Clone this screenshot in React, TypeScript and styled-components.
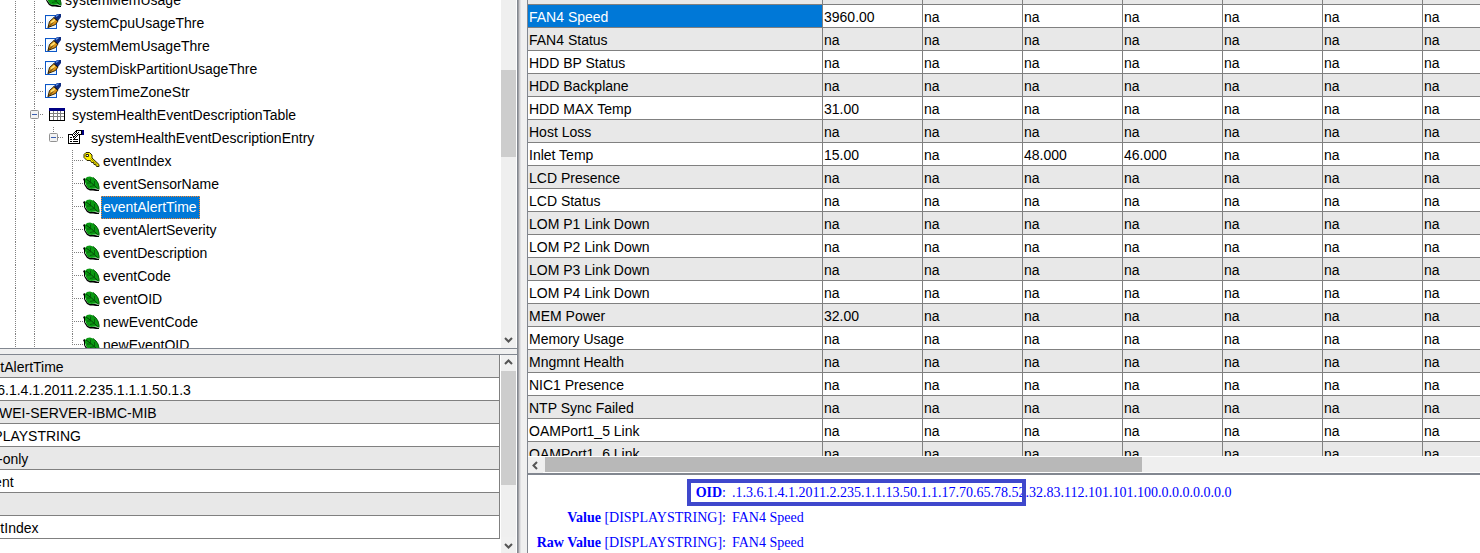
import React from "react";
import styled, { createGlobalStyle, css } from "styled-components";

const GlobalStyle = createGlobalStyle`
  *, *::before, *::after { box-sizing: border-box; }
  body {
    margin: 0;
    background: #eeeeee;
    color: #000;
    font-family: "Liberation Sans", Arial, sans-serif;
    font-size: 14px;
  }
`;

const Window = styled.main`
  display: grid;
  grid-template-columns: 35% 9px minmax(0, 1fr);
  height: 100vh;
  overflow: hidden;
`;

const LeftColumn = styled.section`
  display: grid;
  grid-template-rows: 63fr 5px 36fr;
  min-height: 0;
  min-width: 0;
  border-right: 1px solid #828790;
`;

const RightColumn = styled.section`
  display: grid;
  grid-template-rows: minmax(0, 1fr) 80px;
  min-height: 0;
  border-left: 1px solid #828790;
`;

const VerticalDivider = styled.div`
  background: linear-gradient(to right, #a0a0a4 0 1px, #c8c8cc 1px 2px, #e0e0e2 2px 3px, #f0f0f0 3px);
`;

const HorizontalDivider = styled.div`
  background: #f0f0f0;
`;

const ScrollPane = styled.div`
  display: grid;
  grid-template-columns: minmax(0, 1fr) 16px;
  min-height: 0;
  background: #fff;
`;

const TreePane = styled(ScrollPane)`
  border-bottom: 1px solid #828790;
`;

const DetailsPane = styled(ScrollPane)`
  border-top: 1px solid #828790;
`;

const Viewport = styled.div`
  min-width: 0;
  min-height: 0;
  overflow: hidden;
`;

const Tree = styled.ul`
  list-style: none;
  margin: -11px 0 0;
  padding: 0;
`;

const TreeRow = styled.li`
  display: flex;
  align-items: center;
  height: 23px;
  white-space: nowrap;
`;

const NodeIcon = styled.svg`
  flex: none;
  display: block;
  overflow: visible;
`;

const NodeLabel = styled.span<{ $selected?: boolean; $gap: number }>`
  margin-left: ${(p) => p.$gap}px;
  padding: 0 2px 0 1px;
  line-height: 21px;
  border: 1px solid transparent;
  ${(p) =>
    p.$selected &&
    css`
      background: #0078d7;
      color: #fff;
      border: 1px dotted #ff8728;
    `}
`;

const VerticalBar = styled.div`
  display: flex;
  flex-direction: column;
  margin-right: 1px;
  background: #efefef;
`;

const HorizontalBar = styled.div`
  display: flex;
  height: 15px;
  margin: 1px 0;
  background: #efefef;
`;

const ArrowButton = styled.button`
  flex: none;
  display: grid;
  place-items: center;
  width: 15px;
  height: 16px;
  padding: 0;
  border: 0;
  background: #f0f0f0;
`;

const Gap = styled.div<{ $grow: number }>`
  flex: ${(p) => p.$grow} 1 0;
`;

const Thumb = styled.div<{ $grow: number; $dark?: boolean }>`
  flex: ${(p) => p.$grow} 1 0;
  background: ${(p) => (p.$dark ? "#b8b8b8" : "#cdcdcd")};
`;

const GridTable = styled.table`
  border-collapse: separate;
  border-spacing: 0;
  table-layout: fixed;
`;

const SensorTable = styled(GridTable)`
  width: 995px;
  margin-top: -18px;
`;

const DetailsTable = styled(GridTable)`
  width: calc(100% + 30px);
  margin-left: -31px;
`;

const Row = styled.tr`
  height: 23px;
  background: #fff;
  &:nth-child(odd) { background: #e8e8e8; }
`;

const Cell = styled.td<{ $selected?: boolean }>`
  height: 23px;
  padding: 2px 0 0 1px;
  line-height: 20px;
  border-right: 1px solid #808080;
  border-bottom: 1px solid #808080;
  white-space: nowrap;
  ${(p) =>
    p.$selected &&
    css`
      background: #0078d7;
      color: #fff;
    `}
`;

const TablePane = styled.div`
  display: grid;
  grid-template-rows: minmax(0, 1fr) 17px;
  min-height: 0;
  background: #fff;
`;

const ResultPane = styled.div`
  position: relative;
  border-top: 2px solid #828790;
  background: #fff;
  color: #0000ff;
  overflow: hidden;
`;

const ResultTable = styled.table`
  border-collapse: collapse;
  margin-top: 5px;
  font-family: "Liberation Serif", "Times New Roman", serif;
  font-size: 14px;
  line-height: 25px;
  white-space: nowrap;
`;

const ResultName = styled.th`
  width: 198px;
  padding: 0;
  text-align: right;
  font-weight: 400;
`;

const ResultValue = styled.td`
  padding: 0 0 0 6px;
`;

const Highlight = styled.div`
  position: absolute;
  left: 159px;
  top: 4px;
  width: 339px;
  height: 27px;
  border: 4px solid #3f48cc;
`;

type Kind = "leaf" | "pen" | "table" | "entry" | "key";

const Glyph = ({ kind }: { kind: Kind }) => {
  if (kind === "leaf")
    return (
      <g>
        <path d="M0 3L2 2L2 8L5 12L8 13L12 13L16 14V15H13L10 14.500H7L4 13L2 10L1 8V5Z" fill="#000" />
        <path d="M2 3L4 1L7 0.500L10 1.500L13 4L15 7L16 11V13.500L13 12.500L8 13L5 12L3 9L2 6Z" fill="#0a9a12" />
        <path d="M10 1.500L13 4L15 7L16 11V13.500" fill="none" stroke="#045208" />
        <path d="M3 3L8.500 7L14.500 12.500" fill="none" stroke="#034506" />
        <path d="M7.500 2.500V6M11.500 5V9M4 7H8M7 10.500L11.500 9.500" fill="none" stroke="#045208" strokeWidth="0.800" />
      </g>
    );
  if (kind === "pen")
    return (
      <g>
        <rect x="0.500" y="0.500" width="11" height="13" fill="#e9f5ff" stroke="#0b56c8" />
        <path d="M2 13V6L6 2H1V13Z" fill="#fff" />
        <path d="M3 12.500L4.500 6.500L9 2.500L13 6L10.500 9.500Z" fill="#dc9418" stroke="#3a2604" />
        <path d="M5.500 7L9 4L10.500 5L6.500 9Z" fill="#ffe070" />
        <path d="M3 12.500L8 7.500" stroke="#3a2604" />
        <path d="M9 2L12 -1H16V2L13 6Z" fill="#0e2c80" />
        <path d="M11 1.500L13.500 -0.500" stroke="#5c94ee" strokeWidth="1.500" />
        <path d="M9 2.500L12.500 6" stroke="#000" />
      </g>
    );
  if (kind === "table")
    return (
      <g shapeRendering="crispEdges">
        <rect x="0" y="1" width="16" height="13" fill="#000" />
        <rect x="0" y="1" width="16" height="3" fill="#000084" />
        <path d="M1 4h14v9H1z" fill="#fff" />
        <path d="M4.500 4v9M8.500 4v9M11.500 4v9M1 6.500h14M1 9.500h14" stroke="#808080" />
      </g>
    );
  if (kind === "entry")
    return (
      <g shapeRendering="crispEdges">
        <path d="M0.500 4.500H11.500V13.500H0.500Z" fill="#fff" stroke="#000" />
        <path d="M2 9.500h2M5 9.500h5M2 11.500h2M5 11.500h5M2 7.500h2" stroke="#000" />
        <path d="M4.500 4.500L7.500 1.500L9.500 0.500H13.500V4.500H10.500L6.500 8.500L5.500 7.500Z" fill="#fff" stroke="#000" />
        <path d="M6 4.500h1M8 4.500h1M7 5.500h1M7 3.500h1M9 3.500h1M8 2.500h1M10 2.500h1M6 6.500h1" stroke="#000" />
        <rect x="14" y="0" width="2" height="5" fill="#000084" />
      </g>
    );
  return (
    <g>
      <path
        d="M1 1.500L3 -0.500H6.500L9 2V5L16 11.500V13.500H13.500L12.500 11.500L11 11.500L10.500 9.500L8.500 9.500L7.500 7.500H4L1 4.500Z"
        fill="#fff000"
        stroke="#2c2800"
      />
      <path d="M3 1.500H5.500V3.500H3Z" fill="#fff" stroke="#2c2800" />
      <path d="M7.500 5.500L14.500 12" stroke="#8f8000" />
    </g>
  );
};

type Node = { label: string; kind: Kind; depth: 0 | 1 | 2 | 3; selected?: boolean; last?: boolean };

const nodes: Node[] = [
  { label: "systemMemUsage", kind: "leaf", depth: 0 },
  { label: "systemCpuUsageThre", kind: "pen", depth: 0 },
  { label: "systemMemUsageThre", kind: "pen", depth: 0 },
  { label: "systemDiskPartitionUsageThre", kind: "pen", depth: 0 },
  { label: "systemTimeZoneStr", kind: "pen", depth: 0 },
  { label: "systemHealthEventDescriptionTable", kind: "table", depth: 1 },
  { label: "systemHealthEventDescriptionEntry", kind: "entry", depth: 2 },
  { label: "eventIndex", kind: "key", depth: 3 },
  { label: "eventSensorName", kind: "leaf", depth: 3 },
  { label: "eventAlertTime", kind: "leaf", depth: 3, selected: true },
  { label: "eventAlertSeverity", kind: "leaf", depth: 3 },
  { label: "eventDescription", kind: "leaf", depth: 3 },
  { label: "eventCode", kind: "leaf", depth: 3 },
  { label: "eventOID", kind: "leaf", depth: 3 },
  { label: "newEventCode", kind: "leaf", depth: 3 },
  { label: "newEventOID", kind: "leaf", depth: 3, last: true },
];

const iconLeft = [45, 49, 68, 83];
const labelGap = [2, 5, 5, 2];

const Expander = ({ x }: { x: number }) => (
  <g>
    <rect x={x - 3.5} y="6.500" width="8" height="8" rx="1" fill="#f3f3f3" stroke="#919191" />
    <path d={`M${x - 2} 10.500h5`} stroke="#3a5fb0" />
  </g>
);

const TreeNode = ({ node }: { node: Node }) => {
  const left = iconLeft[node.depth];
  const guide = { stroke: "#808080", strokeDasharray: "1 1", fill: "none" };
  return (
    <TreeRow>
      <NodeIcon width={left + 16} height="23" viewBox={`0 0 ${left + 16} 23`} aria-hidden="true">
        <path d="M15.500 0V23" {...guide} />
        <path d="M34.500 0V23" {...guide} />
        {node.depth < 2 && <path d="M36 10.500H44" {...guide} />}
        {node.depth === 2 && <path d="M53.500 0V8M58 10.500H63" {...guide} />}
        {node.depth === 3 && <path d={`M72.500 0V${node.last ? 11 : 23}M74 10.500H83`} {...guide} />}
        {node.depth === 1 && <Expander x={34} />}
        {node.depth === 2 && <Expander x={53} />}
        <g transform={`translate(${left} 3)`}>
          <Glyph kind={node.kind} />
        </g>
      </NodeIcon>
      <NodeLabel $selected={node.selected} $gap={labelGap[node.depth]}>
        {node.label}
      </NodeLabel>
    </TreeRow>
  );
};

const arrows = {
  up: "M1 6L4.500 2.500L8 6",
  down: "M1 3L4.500 6.500L8 3",
  left: "M6 1L2.500 4.500L6 8",
};

const Arrow = ({ direction }: { direction: keyof typeof arrows }) => (
  <ArrowButton type="button" aria-label={`Scroll ${direction}`}>
    <svg width="9" height="9" viewBox="0 0 9 9" aria-hidden="true">
      <path d={arrows[direction]} fill="none" stroke="#555" strokeWidth="2" />
    </svg>
  </ArrowButton>
);

const details = [
  "eventAlertTime",
  ".1.3.6.1.4.1.2011.2.235.1.1.1.50.1.3",
  "HUAWEI-SERVER-IBMC-MIB",
  "DISPLAYSTRING",
  "read-only",
  "current",
  "",
  "eventIndex",
];

const sensors: [string, string?, string?, string?][] = [
  ["FAN3 Status"],
  ["FAN4 Speed", "3960.00"],
  ["FAN4 Status"],
  ["HDD BP Status"],
  ["HDD Backplane"],
  ["HDD MAX Temp", "31.00"],
  ["Host Loss"],
  ["Inlet Temp", "15.00", "48.000", "46.000"],
  ["LCD Presence"],
  ["LCD Status"],
  ["LOM P1 Link Down"],
  ["LOM P2 Link Down"],
  ["LOM P3 Link Down"],
  ["LOM P4 Link Down"],
  ["MEM Power", "32.00"],
  ["Memory Usage"],
  ["Mngmnt Health"],
  ["NIC1 Presence"],
  ["NTP Sync Failed"],
  ["OAMPort1_5 Link"],
  ["OAMPort1_6 Link"],
];

const results = [
  {
    name: "OID",
    type: "",
    value:
      ".1.3.6.1.4.1.2011.2.235.1.1.13.50.1.1.17.70.65.78.52.32.83.112.101.101.100.0.0.0.0.0.0.0",
  },
  { name: "Value", type: " [DISPLAYSTRING]", value: "FAN4 Speed" },
  { name: "Raw Value", type: " [DISPLAYSTRING]", value: "FAN4 Speed" },
];

export default function App() {
  return (
    <>
      <GlobalStyle />
      <Window>
        <LeftColumn>
          <TreePane>
            <Viewport>
              <Tree>
                {nodes.map((node) => (
                  <TreeNode key={node.label} node={node} />
                ))}
              </Tree>
            </Viewport>
            <VerticalBar>
              <Gap $grow={70} />
              <Thumb $grow={87} />
              <Gap $grow={175} />
              <Arrow direction="down" />
            </VerticalBar>
          </TreePane>
          <HorizontalDivider />
          <DetailsPane>
            <Viewport>
              <DetailsTable>
                <tbody>
                  {details.map((value, i) => (
                    <Row key={i}>
                      <Cell>{value}</Cell>
                    </Row>
                  ))}
                </tbody>
              </DetailsTable>
            </Viewport>
            <VerticalBar>
              <Arrow direction="up" />
              <Thumb $grow={114} />
              <Gap $grow={52} />
              <Arrow direction="down" />
            </VerticalBar>
          </DetailsPane>
        </LeftColumn>
        <VerticalDivider />
        <RightColumn>
          <TablePane>
            <Viewport>
              <SensorTable>
                <colgroup>
                  <col style={{ width: 295 }} />
                </colgroup>
                <tbody>
                  {sensors.map(([name, reading = "na", upper = "na", major = "na"]) => (
                    <Row key={name}>
                      <Cell $selected={name === "FAN4 Speed"}>{name}</Cell>
                      {[reading, "na", upper, major, "na", "na", "na"].map((value, i) => (
                        <Cell key={i}>{value}</Cell>
                      ))}
                    </Row>
                  ))}
                </tbody>
              </SensorTable>
            </Viewport>
            <HorizontalBar>
              <Arrow direction="left" />
              <Gap $grow={2} />
              <Thumb $grow={597} $dark />
              <Gap $grow={338} />
            </HorizontalBar>
          </TablePane>
          <ResultPane>
            <ResultTable>
              <tbody>
                {results.map((r) => (
                  <tr key={r.name}>
                    <ResultName scope="row">
                      <b>{r.name}</b>
                      {r.type}:
                    </ResultName>
                    <ResultValue>{r.value}</ResultValue>
                  </tr>
                ))}
              </tbody>
            </ResultTable>
            <Highlight />
          </ResultPane>
        </RightColumn>
      </Window>
    </>
  );
}
